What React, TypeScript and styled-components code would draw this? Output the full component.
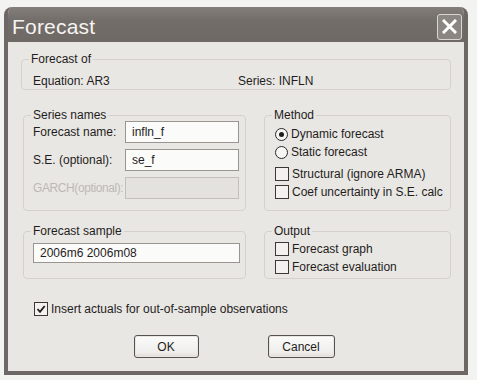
import styled, { createGlobalStyle } from "styled-components";

const GlobalStyle = createGlobalStyle`
  html, body {
    margin: 0;
    background: #f3f3f1;
  }
  body {
    font-family: "Liberation Sans", Arial, sans-serif;
    font-size: 12px;
    color: #1f1d1c;
  }
`;

const Page = styled.div`
  padding: 7px 0 0 4px;
`;

const Window = styled.div`
  box-sizing: border-box;
  width: 464px;
  height: 368px;
  border: 4px solid #6d6865;
  border-top-width: 0;
  border-radius: 8px 8px 0 0;
  background: #e9e7e4;
  display: flex;
  flex-direction: column;
  overflow: hidden;
`;

const TitleBar = styled.div`
  height: 35px;
  padding: 4px 2px 0 4px;
  box-sizing: border-box;
  background: linear-gradient(#847e7a, #736d6a 40%, #6f6966);
  display: flex;
  align-items: center;
  justify-content: space-between;
`;

const Title = styled.span`
  font-size: 21px;
  color: #f6f4f2;
  letter-spacing: 0.2px;
`;

const CloseButton = styled.div`
  width: 25px;
  height: 26px;
  box-sizing: border-box;
  border: 1px solid #d9d5d1;
  border-radius: 3px;
  background: #8c8682;
  display: flex;
  align-items: center;
  justify-content: center;
`;

const Client = styled.div`
  flex: 1;
  padding: 11px 13px 0 13px;
  display: flex;
  flex-direction: column;
`;

const Group = styled.fieldset`
  margin: 0;
  padding: 0 6px 0 9px;
  border: 1px solid #d4d1cd;
  border-radius: 4px;
  min-width: 0;
`;

const Legend = styled.legend`
  padding: 0 2px;
  margin-left: -2px;
  line-height: 12px;
`;

const InfoRow = styled.div`
  display: grid;
  grid-template-columns: 205px 1fr;
  line-height: 14px;
  padding: 9px 0 1px 2px;
`;

const Columns = styled.div<{ $top: number }>`
  display: grid;
  grid-template-columns: 223px 187px;
  column-gap: 18px;
  margin: ${(p) => p.$top}px 0 0 2px;
`;

const FieldList = styled.div`
  display: flex;
  flex-direction: column;
  gap: 6px;
  padding: 0 0 11px;
`;

const FieldRow = styled.div`
  display: flex;
  align-items: center;
  justify-content: space-between;
`;

const FieldLabel = styled.span<{ $disabled?: boolean }>`
  color: ${(p) => (p.$disabled ? "#bcb9b5" : "inherit")};
  letter-spacing: ${(p) => (p.$disabled ? "-0.4px" : "0")};
  white-space: nowrap;
`;

const TextBox = styled.div<{ $disabled?: boolean; $w: number; $h?: number }>`
  box-sizing: border-box;
  flex: none;
  width: ${(p) => p.$w}px;
  height: ${(p) => p.$h ?? 22}px;
  border: 1px solid ${(p) => (p.$disabled ? "#c3c0bc" : "#9a9591")};
  background: ${(p) => (p.$disabled ? "#e4e2df" : "#fbfbfa")};
  padding: 0 6px;
  display: flex;
  align-items: center;
`;

const OptionList = styled.div<{ $top: number; $bottom: number }>`
  display: flex;
  flex-direction: column;
  padding: ${(p) => p.$top}px 0 ${(p) => p.$bottom}px 1px;
`;

const Option = styled.label<{ $gapBefore?: number }>`
  display: flex;
  align-items: center;
  gap: 3px;
  height: 18px;
  margin-top: ${(p) => p.$gapBefore ?? 0}px;
`;

const Radio = styled.span<{ $on?: boolean }>`
  box-sizing: border-box;
  width: 13px;
  height: 13px;
  border: 1px solid #2a2826;
  border-radius: 50%;
  background: #f7f6f4;
  display: flex;
  align-items: center;
  justify-content: center;
  &::after {
    content: "";
    width: 5px;
    height: 5px;
    border-radius: 50%;
    background: ${(p) => (p.$on ? "#1f1d1c" : "transparent")};
  }
`;

const Check = styled.span`
  box-sizing: border-box;
  width: 14px;
  height: 14px;
  border: 1px solid #3a3735;
  background: #f2f1ef;
  display: flex;
  align-items: center;
  justify-content: center;
`;

const SampleBox = styled.div`
  padding: 6px 0 14px;
`;

const ActualsRow = styled(Option)`
  margin: 21px 0 0 13px;
`;

const ButtonRow = styled.div`
  display: flex;
  justify-content: center;
  gap: 69px;
  margin: 17px 0 0 -4px;
`;

const Button = styled.div<{ $w: number }>`
  box-sizing: border-box;
  width: ${(p) => p.$w}px;
  height: 23px;
  border: 1px solid #56524f;
  border-radius: 3px;
  background: linear-gradient(#fbfbfa, #eeedeb 80%, #dcdad7);
  box-shadow: inset 0 0 0 1px #e9e6e2;
  display: flex;
  align-items: center;
  justify-content: center;
`;

function CloseIcon() {
  return (
    <svg width="15" height="15" viewBox="0 0 15 15">
      <path d="M2 2 L13 13 M13 2 L2 13" stroke="#fff" strokeWidth="3" strokeLinecap="square" />
    </svg>
  );
}

function Tick() {
  return (
    <svg width="10" height="10" viewBox="0 0 10 10">
      <path d="M1.5 5 L4 7.8 L8.7 2" fill="none" stroke="#1f1d1c" strokeWidth="1.8" />
    </svg>
  );
}

export default function App() {
  return (
    <>
      <GlobalStyle />
      <Page>
        <Window>
          <TitleBar>
            <Title>Forecast</Title>
            <CloseButton>
              <CloseIcon />
            </CloseButton>
          </TitleBar>
          <Client>
            <Group>
              <Legend>Forecast of</Legend>
              <InfoRow>
                <span>Equation: AR3</span>
                <span>Series: INFLN</span>
              </InfoRow>
            </Group>

            <Columns $top={19}>
              <Group>
                <Legend>Series names</Legend>
                <FieldList>
                  <FieldRow>
                    <FieldLabel>Forecast name:</FieldLabel>
                    <TextBox $w={114}>infln_f</TextBox>
                  </FieldRow>
                  <FieldRow>
                    <FieldLabel>S.E. (optional):</FieldLabel>
                    <TextBox $w={114}>se_f</TextBox>
                  </FieldRow>
                  <FieldRow>
                    <FieldLabel $disabled>GARCH(optional):</FieldLabel>
                    <TextBox $w={114} $disabled />
                  </FieldRow>
                </FieldList>
              </Group>
              <Group>
                <Legend>Method</Legend>
                <OptionList $top={4} $bottom={8}>
                  <Option>
                    <Radio $on />
                    Dynamic forecast
                  </Option>
                  <Option>
                    <Radio />
                    Static forecast
                  </Option>
                  <Option $gapBefore={4}>
                    <Check />
                    Structural (ignore ARMA)
                  </Option>
                  <Option>
                    <Check />
                    Coef uncertainty in S.E. calc
                  </Option>
                </OptionList>
              </Group>
            </Columns>

            <Columns $top={14}>
              <Group>
                <Legend>Forecast sample</Legend>
                <SampleBox>
                  <TextBox $w={207} $h={20}>2006m6 2006m08</TextBox>
                </SampleBox>
              </Group>
              <Group>
                <Legend>Output</Legend>
                <OptionList $top={3} $bottom={2}>
                  <Option>
                    <Check />
                    Forecast graph
                  </Option>
                  <Option>
                    <Check />
                    Forecast evaluation
                  </Option>
                </OptionList>
              </Group>
            </Columns>

            <ActualsRow>
              <Check>
                <Tick />
              </Check>
              Insert actuals for out-of-sample observations
            </ActualsRow>

            <ButtonRow>
              <Button $w={65}>OK</Button>
              <Button $w={67}>Cancel</Button>
            </ButtonRow>
          </Client>
        </Window>
      </Page>
    </>
  );
}
